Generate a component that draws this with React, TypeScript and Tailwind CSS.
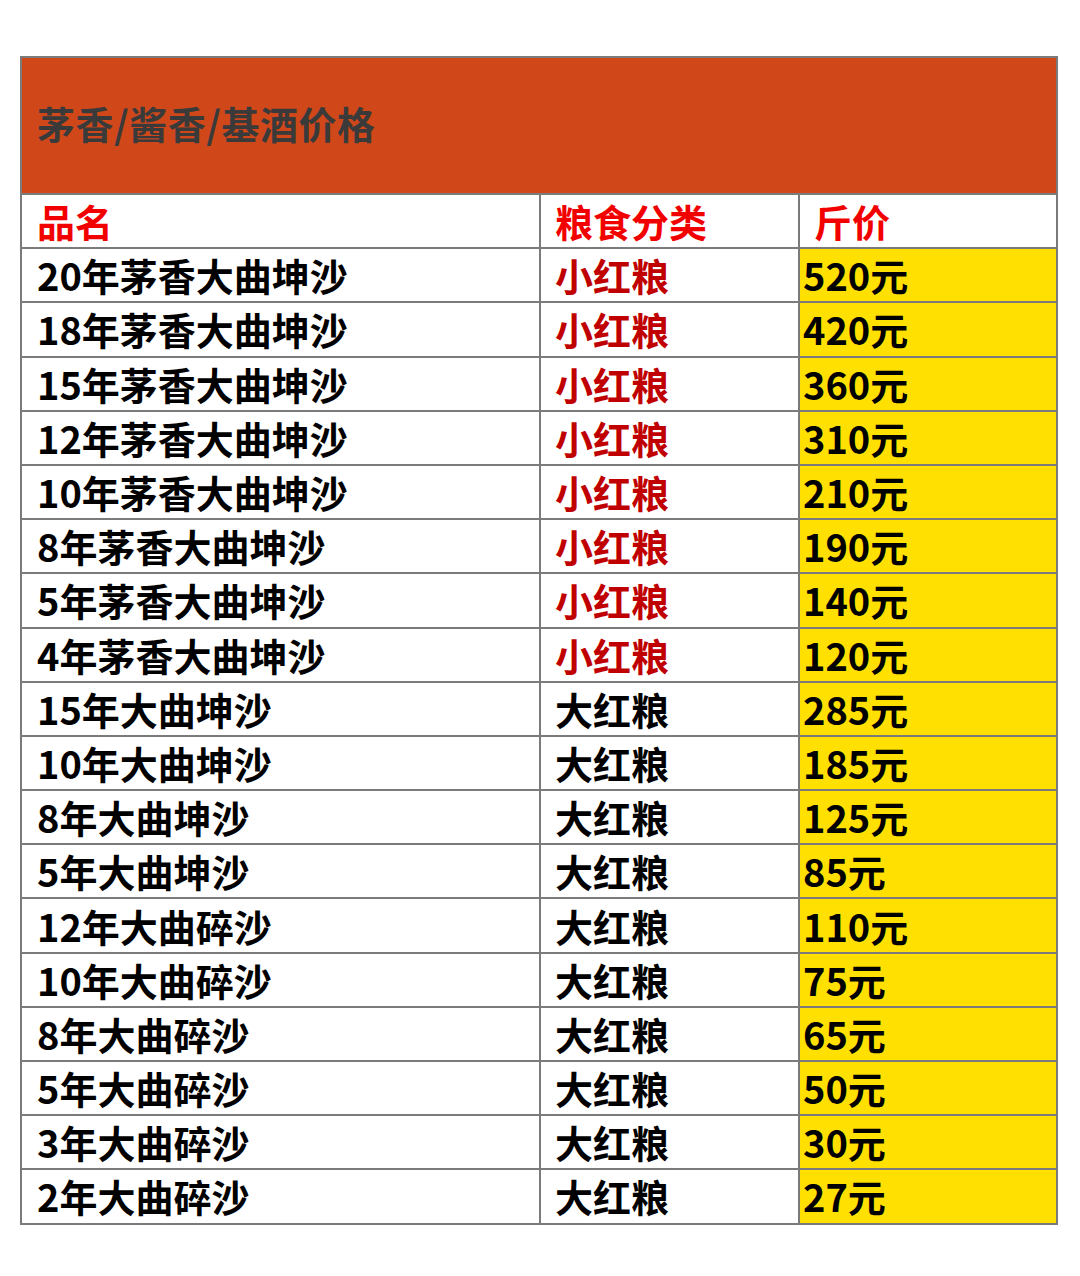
import React from "react";

type Row = { name: string; grain: string; price: string; small: boolean };

const rows: Row[] = [
  { name: "20年茅香大曲坤沙", grain: "小红粮", price: "520元", small: true },
  { name: "18年茅香大曲坤沙", grain: "小红粮", price: "420元", small: true },
  { name: "15年茅香大曲坤沙", grain: "小红粮", price: "360元", small: true },
  { name: "12年茅香大曲坤沙", grain: "小红粮", price: "310元", small: true },
  { name: "10年茅香大曲坤沙", grain: "小红粮", price: "210元", small: true },
  { name: "8年茅香大曲坤沙", grain: "小红粮", price: "190元", small: true },
  { name: "5年茅香大曲坤沙", grain: "小红粮", price: "140元", small: true },
  { name: "4年茅香大曲坤沙", grain: "小红粮", price: "120元", small: true },
  { name: "15年大曲坤沙", grain: "大红粮", price: "285元", small: false },
  { name: "10年大曲坤沙", grain: "大红粮", price: "185元", small: false },
  { name: "8年大曲坤沙", grain: "大红粮", price: "125元", small: false },
  { name: "5年大曲坤沙", grain: "大红粮", price: "85元", small: false },
  { name: "12年大曲碎沙", grain: "大红粮", price: "110元", small: false },
  { name: "10年大曲碎沙", grain: "大红粮", price: "75元", small: false },
  { name: "8年大曲碎沙", grain: "大红粮", price: "65元", small: false },
  { name: "5年大曲碎沙", grain: "大红粮", price: "50元", small: false },
  { name: "3年大曲碎沙", grain: "大红粮", price: "30元", small: false },
  { name: "2年大曲碎沙", grain: "大红粮", price: "27元", small: false },
];

const font = {
  fontFamily: '"Noto Sans CJK SC", "Noto Sans", sans-serif',
};

export default function App() {
  return (
    <div className="bg-white w-[1080px] h-[1276px] pt-[56px] pl-[20px]" style={font}>
      <div className="w-[1038px] border-2 border-[#7b7b7b]">
        <div className="h-[137px] bg-[#d0481a] flex items-center pl-[15px] pb-[5px] border-b-2 border-[#7b7b7b]">
          <span className="text-[38px] font-bold text-[#3a3a3a] leading-none tracking-[0.5px]">
            茅香/酱香/基酒价格
          </span>
        </div>
        <div className="flex h-[52.2px] font-bold text-[38px] leading-none">
          <div className="w-[517px] flex items-center pl-[15px] text-[#f20000]">品名</div>
          <div className="w-[259px] flex items-center pl-[14px] border-l-2 border-[#7b7b7b] text-[#f20000]">
            粮食分类
          </div>
          <div className="flex-1 flex items-center pl-[14px] border-l-2 border-[#7b7b7b] text-[#f20000]">
            斤价
          </div>
        </div>
        {rows.map((r) => (
          <div
            key={r.name}
            className="flex h-[54.2px] border-t-2 border-[#7b7b7b] font-bold text-[38px] leading-none"
          >
            <div className="w-[517px] flex items-center pl-[15px] text-black">{r.name}</div>
            <div
              className={
                "w-[259px] flex items-center pl-[14px] border-l-2 border-[#7b7b7b] " +
                (r.small ? "text-[#c00000]" : "text-black")
              }
            >
              {r.grain}
            </div>
            <div className="flex-1 flex items-center pl-[3px] border-l-2 border-[#7b7b7b] bg-[#ffe000] text-black">
              {r.price}
            </div>
          </div>
        ))}
      </div>
    </div>
  );
}
